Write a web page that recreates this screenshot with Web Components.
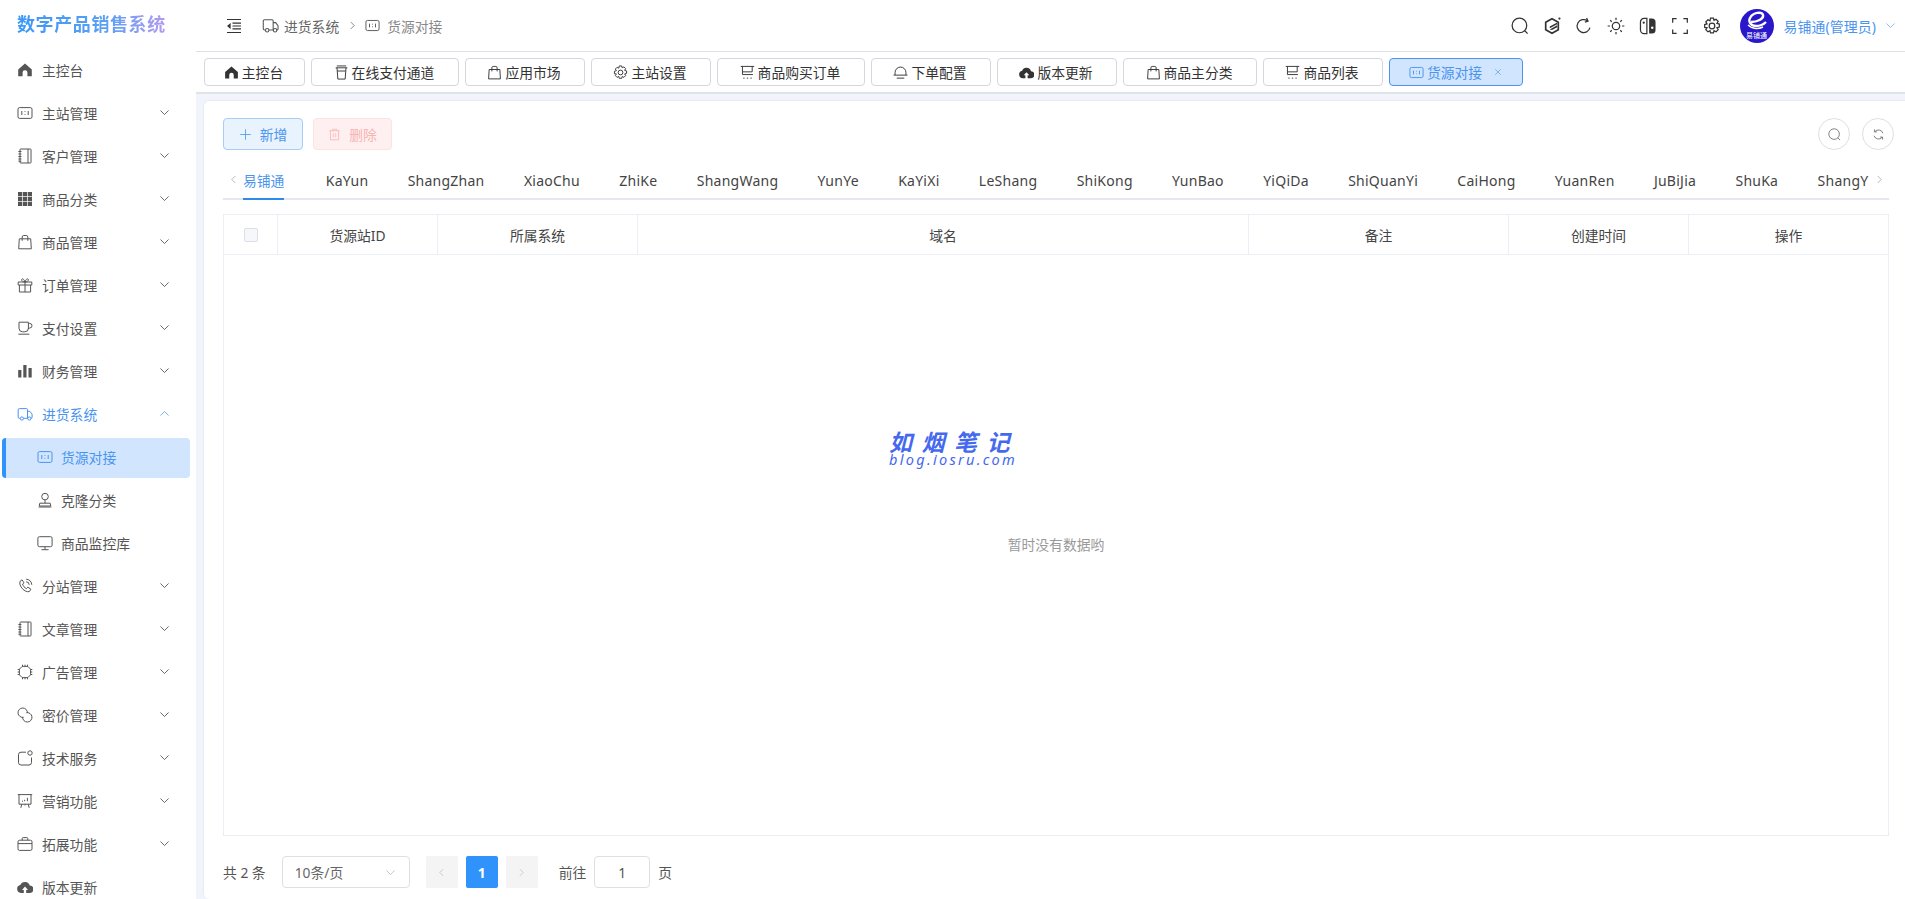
<!DOCTYPE html>
<html lang="zh"><head><meta charset="utf-8"><title>货源对接</title>
<style>
html,body{margin:0;height:100%;overflow:hidden;background:#f1f5fb}
body{font-family:"Noto Sans","Noto Sans CJK SC",sans-serif;color:#444}
</style></head><body>
<app-shell>
  <side-nav slot="nav">
    <nav-item icon="home" label="主控台" leaf></nav-item>
    <nav-item icon="card" label="主站管理"></nav-item>
    <nav-item icon="book" label="客户管理"></nav-item>
    <nav-item icon="grid" label="商品分类"></nav-item>
    <nav-item icon="bag" label="商品管理"></nav-item>
    <nav-item icon="gift" label="订单管理"></nav-item>
    <nav-item icon="cup" label="支付设置"></nav-item>
    <nav-item icon="bars" label="财务管理"></nav-item>
    <nav-item icon="truck" label="进货系统" open></nav-item>
    <nav-item icon="card" label="货源对接" sub active></nav-item>
    <nav-item icon="stamp" label="克隆分类" sub></nav-item>
    <nav-item icon="monitor" label="商品监控库" sub></nav-item>
    <nav-item icon="phone" label="分站管理"></nav-item>
    <nav-item icon="book" label="文章管理"></nav-item>
    <nav-item icon="chip" label="广告管理"></nav-item>
    <nav-item icon="link" label="密价管理"></nav-item>
    <nav-item icon="note" label="技术服务"></nav-item>
    <nav-item icon="board" label="营销功能"></nav-item>
    <nav-item icon="case" label="拓展功能"></nav-item>
    <nav-item icon="cloud" label="版本更新" leaf></nav-item>
  </side-nav>
  <top-bar slot="top"></top-bar>
  <tab-strip slot="tabs">
    <tab-chip icon="home" w="101">主控台</tab-chip>
    <tab-chip icon="cupt" w="148">在线支付通道</tab-chip>
    <tab-chip icon="bag" w="120">应用市场</tab-chip>
    <tab-chip icon="gear" w="120">主站设置</tab-chip>
    <tab-chip icon="cart" w="148">商品购买订单</tab-chip>
    <tab-chip icon="bell" w="120">下单配置</tab-chip>
    <tab-chip icon="cloud" w="120">版本更新</tab-chip>
    <tab-chip icon="bag" w="134">商品主分类</tab-chip>
    <tab-chip icon="cart" w="120">商品列表</tab-chip>
    <tab-chip icon="card" w="134" active>货源对接</tab-chip>
  </tab-strip>
  <source-panel slot="main"></source-panel>
</app-shell>
<script>
const P={
home:'<path fill="currentColor" stroke="none" d="M8 1.600 1.200 7.400v6.900h4.400V10.600a2.400 2.400 0 0 1 4.800 0v3.700h4.400V7.400z"/>',
card:'<rect x="1" y="2.600" width="14" height="10.800" rx="1.600"/><path d="M4.800 6v4M11.200 6v4M8 6.200v.8M8 9v.8"/>',
book:'<rect x="3" y="1" width="11" height="14" rx=".6"/><path d="M11 1v14M1.400 3.500h3M1.400 6h3M1.400 8.500h3M1.400 11h3M1.400 13.200h3"/>',
grid:'<g fill="currentColor" stroke="none"><rect x="1" y="1" width="4.200" height="4.200"/><rect x="5.900" y="1" width="4.200" height="4.200"/><rect x="10.800" y="1" width="4.200" height="4.200"/><rect x="1" y="5.900" width="4.200" height="4.200"/><rect x="5.900" y="5.900" width="4.200" height="4.200"/><rect x="10.800" y="5.900" width="4.200" height="4.200"/><rect x="1" y="10.800" width="4.200" height="4.200"/><rect x="5.900" y="10.800" width="4.200" height="4.200"/><rect x="10.800" y="10.800" width="4.200" height="4.200"/></g>',
bag:'<path d="M2.300 4.800h11.400l.6 10H1.700zM5.200 6.800V3a1.500 1.500 0 0 1 1.500-1.500h2.600A1.500 1.500 0 0 1 10.800 3v3.800"/>',
gift:'<path d="M1.200 5h13.600v3H1.200zM2.400 8v7h11.200V8M8 5v10M8 5C6 5 4.600 4 4.600 2.800S6.600.8 8 5c1.400-4.200 3.400-3.400 3.400-2.200S10 5 8 5"/>',
cup:'<path d="M2 2.200h9.400v6a3.600 3.600 0 0 1-3.600 3.600H5.600A3.600 3.600 0 0 1 2 8.200zM11.400 3.400h1.300a1.900 1.900 0 0 1 0 4.600L11 8.800M1.400 14.200h11"/>',
bars:'<g fill="currentColor" stroke="none"><rect x="1.200" y="7" width="3.200" height="7.500"/><rect x="6.300" y="2" width="3.200" height="12.500"/><rect x="11.500" y="5" width="3.200" height="9.500"/></g>',
truck:'<path d="M3.200 12.300H2.400a1.200 1.200 0 0 1-1.200-1.200V3.800a1.200 1.200 0 0 1 1.200-1.200h7.100a1 1 0 0 1 1 1v8.700H6.600M10.500 5.300h2.300l2.300 2.800v3a1.100 1.100 0 0 1-1.100 1.200h-.3M10.500 12.300h.2"/><circle cx="4.900" cy="12.500" r="1.600"/><circle cx="12.300" cy="12.500" r="1.600"/>',
stamp:'<circle cx="8" cy="4.600" r="3.300"/><path d="M8 7.900v3.300M2.800 11.200h10.400l.6 2.800H2.200zM1.600 15h12.800"/>',
monitor:'<rect x=".9" y="1.700" width="14.200" height="10" rx="1.500"/><path d="M8 11.700v3M4.400 14.700h7.200"/>',
phone:'<path d="M3.200 3.200 5 1.800l2 3-1.400 1.300c.3 1.700 2.200 3.800 3.800 4.500L10.900 9.200l3 2-1.500 2.300C8 15.200 1 7.500 3.200 3.200zM9.200 1.200a5.700 5.700 0 0 1 5.600 5.600M9.200 3.800a3 3 0 0 1 3 3"/>',
chip:'<path d="M5.200 2.400h5.600l2.800 2.800v5.600l-2.800 2.800H5.200l-2.800-2.800V5.200z"/><path d="M5.500 .7v1.700M8 .7v1.700M10.500 .7v1.700M5.500 13.600v1.700M8 13.600v1.700M10.500 13.600v1.700M.7 5.500h1.700M.7 8h1.700M.7 10.500h1.700M13.600 5.500h1.700M13.600 8h1.700M13.600 10.500h1.700"/>',
link:'<path d="M6.600 10.300A4.700 4.700 0 1 1 10.400 6"/><path d="M9.400 5.700A4.700 4.700 0 1 1 5.600 10"/>',
note:'<path d="M9 2.200H4a2.500 2.500 0 0 0-2.500 2.500v8A2.500 2.500 0 0 0 4 15h8a2.500 2.500 0 0 0 2.500-2.500V7.500"/><circle cx="13" cy="3" r="2.200"/>',
board:'<path d="M.8 1.600h14.400M2 1.600v9.600h12V1.600M4.800 11.200l-1 3.600M11.200 11.200l1 3.600M8 11.200v1.200M5 8.200h1M7.600 6.800v1.400M10.400 4.800v3.400"/>',
case:'<rect x="1" y="4.200" width="14" height="10.200" rx="1.600"/><path d="M1 7.600h14M5.200 4.200V2.600a1 1 0 0 1 1-1h3.600a1 1 0 0 1 1 1v1.600"/>',
cloud:'<path fill="currentColor" stroke="none" d="M12.800 6.600A5 5 0 0 0 3.300 6.100 4 4 0 0 0 4 14h2.800v-3H5l3-3.400 3 3.400H9.200v3H12.500a3.700 3.700 0 0 0 .3-7.400z"/>',
cupt:'<path d="M1.800 3h12.400M3 1h10M3.200 3l.9 12h7.800l.9-12M3.600 6.400h8.800"/>',
gear:'<path d="M6.700 1h2.600l.5 2 1.800-1 1.900 1.900-1.100 1.800 2.100.6v2.600l-2.100.6 1.100 1.800-1.900 1.900-1.800-1-.5 2H6.700l-.5-2-1.800 1-1.900-1.900 1.100-1.800L1.500 9.300V6.700l2.100-.6-1.100-1.800L4.400 2.400l1.800 1z"/><circle cx="8" cy="8" r="2.500"/>',
cart:'<path d="M.8 1.500h14.400M2.600 1.500v8.700h11.200M13 1.500v5.800H2.600M3.500 14h1.400M7.300 14h1.400M11.100 14h1.400"/>',
bell:'<path d="M2.200 10.600V8a5.800 5.800 0 0 1 11.600 0v2.600M.6 10.800h14.800M4 14h8"/>',
search:'<circle cx="7.500" cy="7.500" r="6.500"/><path d="m12 12 2.800 2.800"/>',
hex:'<path d="M8 1.500 13.600 4.700v6.600L8 14.500 2.400 11.300V4.700z" stroke-width="1.500"/><path fill="currentColor" stroke="none" d="M6 8.400 12.600 4.800v1.600L6 10zM6 11 12.600 7.400v1.600L8 11.500z"/><circle cx="14.600" cy="1.400" r="1" fill="currentColor" stroke="none"/>',
refresh:'<path d="M13.300 9.500A5.800 5.800 0 1 1 11 3.300M10.300 .9l1.300 2.700-2.800 1"/>',
sun:'<circle cx="8" cy="8" r="3.300"/><path d="M8 .6v2M8 13.400v2M.6 8h2M13.400 8h2M2.800 2.800l1.400 1.400M11.800 11.800l1.400 1.400M2.800 13.200l1.400-1.400M11.800 4.200l1.400-1.400"/>',
switch:'<path d="M7 1.300H4.500A3.200 3.200 0 0 0 1.300 4.500v7a3.200 3.200 0 0 0 3.200 3.200H7z"/><circle cx="4.200" cy="5" r="1" fill="currentColor" stroke="none"/><path fill="currentColor" stroke="none" d="M9 1.300h2.500a3.200 3.200 0 0 1 3.200 3.200v7a3.200 3.200 0 0 1-3.200 3.200H9z"/><circle cx="11.800" cy="9.600" r="1.100" fill="#fff" stroke="none"/>',
full:'<path d="M1.500 5V1.500H5M11 1.500h3.500V5M14.500 11v3.500H11M5 14.500H1.500V11"/>',
indent:'<path d="M1 1.500h14M6.500 5.200H15M6.500 8H15M6.500 10.800H15M1 14.500h14"/><path fill="currentColor" stroke="none" d="M4.600 5 1 8l3.600 3z"/>',
plus:'<path d="M8 1.500v13M1.500 8h13"/>',
trash:'<path d="M1.500 3.400h13M5.500 3.400V1.500h5v1.900M3 3.400V14.500h10V3.400M6.500 6.500v5M9.500 6.500v5"/>',
sync:'<path d="M13.500 6.500A5.800 5.800 0 0 0 3.500 4.500M2.500 9.500a5.800 5.800 0 0 0 10 2M3 1.800v3h3M13 14.200v-3h-3"/>',
down:'<path d="m3 5.500 5 5 5-5"/>',up:'<path d="m3 10.500 5-5 5 5"/>',left:'<path d="M10.500 3 5.500 8l5 5"/>',right:'<path d="m5.500 3 5 5-5 5"/>',close:'<path d="m3.500 3.500 9 9M12.500 3.500l-9 9"/>'
};
function svg(n,s,sw){return `<svg xmlns="http://www.w3.org/2000/svg" width="${s}" height="${s}" viewBox="0 0 16 16" fill="none" stroke="currentColor" stroke-width="${sw||1}" style="display:block;flex:none">${P[n]}</svg>`}
class Base extends HTMLElement{
  constructor(){super();this.attachShadow({mode:'open'})}
  render(h){this.shadowRoot.innerHTML=h}
}
customElements.define('app-shell',class extends Base{connectedCallback(){this.render(`<style>
:host{display:grid;grid-template-columns:196px 1fr;height:899px;overflow:hidden}
.nav{grid-row:1;display:block;overflow:hidden;background:#fff}
.r{display:flex;flex-direction:column;min-width:0;height:899px}
</style><div class="nav"><slot name="nav"></slot></div><div class="r"><slot name="top"></slot><slot name="tabs"></slot><slot name="main"></slot></div>`)}});
customElements.define('side-nav',class extends Base{connectedCallback(){this.render(`<style>
:host{display:block;height:899px;overflow:hidden}
.logo{height:46px;padding-left:17px;display:flex;align-items:center;font-size:18px;font-weight:700;letter-spacing:.6px;white-space:nowrap}
.logo span{background:linear-gradient(90deg,#3a97f8 0%,#5aa0f5 60%,#b49af0 100%);-webkit-background-clip:text;background-clip:text;color:transparent}
.list{padding-top:2px}
</style><div class="logo"><span>数字产品销售系统</span></div><div class="list"><slot></slot></div>`)}});
customElements.define('nav-item',class extends Base{connectedCallback(){
 const a=n=>this.hasAttribute(n),sub=a('sub'),act=a('active'),open=a('open');
 this.render(`<style>
:host{display:block;height:43px}
.i{box-sizing:border-box;height:43px;display:flex;align-items:center;padding-left:${sub?37:17}px;color:${open||act?'#4a94ee':'#555'};font-size:13.800px;white-space:nowrap;position:relative}
.t{margin-left:${sub?8:9}px;flex:1}
.c{margin-right:25px;color:${open?'#6aa7ef':'#555'}}
.bg{position:absolute;left:2px;top:3px;width:188px;height:40px;background:#d1e6fe;border-radius:4px;overflow:hidden}
.bg::before{content:"";position:absolute;left:0;top:0;bottom:0;width:4px;background:#2f93fb}
svg,.t{position:relative}
</style><div class="i">${act?'<div class="bg"></div>':''}${svg(this.getAttribute('icon'),16,1)}<span class="t">${this.getAttribute('label')}</span>${sub||a('leaf')?'':`<span class="c">${svg(open?'up':'down',13,1.100)}</span>`}</div>`)}});
customElements.define('top-bar',class extends Base{connectedCallback(){
 const ic=['search','hex','refresh','sun','switch','full','gear'];
 this.render(`<style>
:host{display:flex;align-items:center;box-sizing:border-box;height:52px;flex:none;background:#fff;border-bottom:1px solid #dcdfe6;padding-left:30px;color:#333}
.crumb{display:flex;align-items:center;font-size:13.800px;color:#666;margin-left:20px}
.crumb svg{color:#555}
.crumb span{margin-left:5px}
.sep{margin:0 7px 0 8px;color:#bbb}
.acts{margin-left:auto;display:flex;align-items:center;gap:14px;color:#333}
.who{display:flex;align-items:center;margin-left:19px;color:#4a94ee;font-size:13.900px}
.who span{margin:0 8px 0 10px;letter-spacing:.1px}
.av{width:34px;height:34px;border-radius:50%;background:#2a17c9;position:relative;overflow:hidden;color:#fff;flex:none}
.av svg{position:absolute;left:5px;top:2px}
.av b{position:absolute;left:0;right:0;bottom:3px;text-align:center;font-size:7px;line-height:8px;font-weight:400;white-space:nowrap}
.ch{margin-right:8px;color:#7aaef0}
</style>${svg('indent',16,1.200)}
<div class="crumb">${svg('truck',17,1)}<span>进货系统</span><div class="sep">${svg('right',11,1)}</div>${svg('card',15,1)}<span style="color:#888;margin-left:7px">货源对接</span></div>
<div class="acts">${ic.map(n=>svg(n,18,1.100)).join('')}</div>
<div class="who"><div class="av"><svg width="24" height="22" viewBox="0 0 24 22" fill="none" stroke="#fff"><path stroke-width="2.400" d="M6 11C12 11 19 8 18 4 17 .5 8 1 5 7c-2 4 1 8 6 8 5 0 8-2 10-4"/><path stroke-width="1.400" d="M3 14c3 3 9 5 15 2"/></svg><b>易铺通</b></div><span>易铺通(管理员)</span><div class="ch">${svg('down',13,1)}</div></div>`)}});
customElements.define('tab-strip',class extends Base{connectedCallback(){this.render(`<style>
:host{display:flex;align-items:center;gap:6px;box-sizing:border-box;height:42px;flex:none;background:#fff;padding-left:8px;border-bottom:2px solid #dfe3ea}
</style><slot></slot>`)}});
customElements.define('tab-chip',class extends Base{connectedCallback(){
 const act=this.hasAttribute('active');
 this.render(`<style>
:host{display:flex;align-items:center;justify-content:center;box-sizing:border-box;height:28px;width:${this.getAttribute('w')}px;border:1px solid ${act?'#4a94ee':'#d4d7dc'};border-radius:4px;background:${act?'#d1e6fe':'#fff'};color:${act?'#4a94ee':'#333'};font-size:13.800px;white-space:nowrap;padding-right:${act?0:2}px}
span{margin-left:3px}
.x{margin-left:11px;color:#4a94ee}
</style>${svg(this.getAttribute('icon'),15,1)}<span><slot></slot></span>${act?`<div class="x">${svg('close',10,1)}</div>`:''}`)}});
customElements.define('source-panel',class extends Base{connectedCallback(){
 const names=['KaYun','ShangZhan','XiaoChu','ZhiKe','ShangWang','YunYe','KaYiXi','LeShang','ShiKong','YunBao','YiQiDa','ShiQuanYi','CaiHong','YuanRen','JuBiJia','ShuKa','ShangY'];
 const heads=['货源站ID','所属系统','域名','备注','创建时间','操作'];
 this.render(`<style>
:host{display:flex;flex-direction:column;flex:1;min-height:0;box-sizing:border-box;margin:6px 0 0 7px;padding:17px 16px 0 19px;background:#fff;border-radius:6px 0 0 6px;border-top:1px solid #e6ebf5;border-left:1px solid #e6ebf5;position:relative;font-size:13.800px;color:#444}
.tools{display:flex;align-items:center;height:32px;margin-right:-5px;flex:none}
.btn{box-sizing:border-box;height:32px;width:80px;display:flex;align-items:center;justify-content:center;gap:8px;border-radius:4px;border:1px solid #a5cdf6;background:#e9f3fe;color:#4a94ee;font-size:13.800px}
.btn.del{margin-left:10px;width:79px;border-color:#fde2e2;background:#fef0f0;color:#f7b4b4}
.round{box-sizing:border-box;width:32px;height:32px;border:1px solid #dcdfe6;border-radius:50%;display:flex;align-items:center;justify-content:center;color:#666;margin-left:12px}
.round.first{margin-left:auto}
.sub{display:flex;align-items:flex-start;height:50px;flex:none;position:relative;border-bottom:2px solid #e4e7ed;box-sizing:border-box}
.arr{flex:none;width:20px;height:58px;display:flex;align-items:center;justify-content:center;color:#999}
.scroll{flex:1;min-width:0;overflow:hidden;display:flex;gap:39.350px;height:50px}
.tb{flex:none;height:50px;box-sizing:border-box;display:flex;align-items:center;font-size:14px;letter-spacing:.25px;color:#444;padding-top:10px}
.tb.on{color:#4a94ee;border-bottom:2px solid #2f8ae8;letter-spacing:0;font-size:13.800px;padding-top:12px;margin-right:2px}
.table{box-sizing:border-box;margin-top:14px;flex:none;height:622px;border:1px solid #ebeef5;display:grid;grid-template-rows:40px 1fr}
.hd{display:grid;grid-template-columns:54px 160px 200px 611px 260px 180px 1fr;border-bottom:1px solid #ebeef5}
.hd div{display:flex;align-items:center;justify-content:center;border-right:1px solid #ebeef5}
.hd div:last-child{border-right:0}
.cb{box-sizing:border-box;width:14px;height:14px;border:1px solid #dcdfe6;border-radius:2px;background:#f5f7fa}
.empty{display:flex;align-items:center;justify-content:center;color:#999;font-size:13.800px;padding-bottom:2px}
.pager{display:flex;align-items:center;height:32px;margin-top:20px;font-size:13.800px;color:#555;flex:none}
.sel{box-sizing:border-box;width:128px;height:32px;border:1px solid #dcdfe6;border-radius:4px;margin-left:16px;display:flex;align-items:center;justify-content:space-between;padding:0 12px;color:#666}
.sel i{color:#bbb;display:block}
.pg{box-sizing:border-box;width:32px;height:32px;background:#f4f4f5;border-radius:2px;display:flex;align-items:center;justify-content:center;color:#bbb;margin-left:8px}
.pg.first{margin-left:16px}
.pg.on{background:#2f93fb;color:#fff;font-weight:700}
.go{margin-left:21px}
.inp{box-sizing:border-box;width:56px;height:32px;border:1px solid #dcdfe6;border-radius:4px;display:flex;align-items:center;justify-content:center;margin:0 8px}
.wm{position:absolute;left:683px;top:329px;color:#4569ee;font-style:italic;font-family:"Noto Sans CJK SC","Noto Sans",sans-serif;text-align:left;line-height:1;white-space:nowrap}
.wm b{display:block;font-size:23px;letter-spacing:9.500px;margin-left:2px}
.wm span{display:block;font-size:14.500px;letter-spacing:2.300px;margin:-1px 0 0 2px;font-family:"Noto Sans",sans-serif}
</style>
<div class="tools"><div class="btn">${svg('plus',13,1)}<span>新增</span></div><div class="btn del">${svg('trash',13,1)}<span>删除</span></div>
<div class="round first">${svg('search',13,1)}</div><div class="round">${svg('sync',13,1)}</div></div>
<div class="sub"><div class="arr">${svg('left',11,1)}</div><div class="scroll"><div class="tb on">易铺通</div>${names.map(n=>`<div class="tb">${n}</div>`).join('')}</div><div class="arr">${svg('right',11,1)}</div></div>
<div class="table"><div class="hd"><div><span class="cb"></span></div>${heads.map(h=>`<div>${h}</div>`).join('')}</div><div class="empty">暂时没有数据哟</div></div>
<div class="pager"><span>共 2 条</span><div class="sel"><span>10条/页</span><i>${svg('down',13,1)}</i></div>
<div class="pg first">${svg('left',11,1)}</div><div class="pg on">1</div><div class="pg">${svg('right',11,1)}</div>
<span class="go">前往</span><div class="inp">1</div><span>页</span></div>
<div class="wm"><b>如烟笔记</b><span>blog.iosru.com</span></div>`)}});
</script>
</body></html>
